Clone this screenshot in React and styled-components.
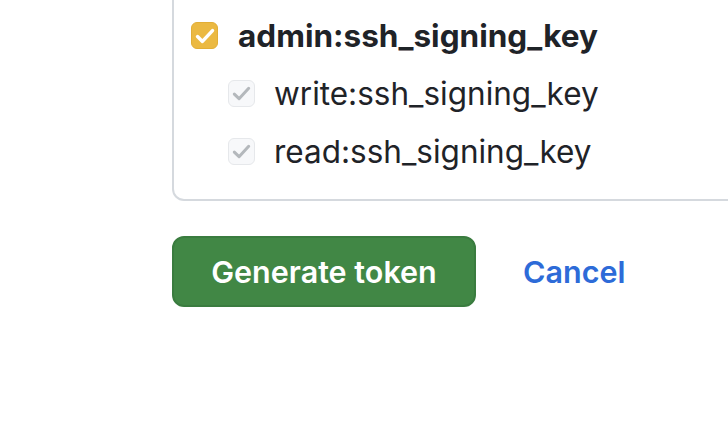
import React from 'react';
import { styled, createGlobalStyle } from 'styled-components';

const Global = createGlobalStyle`
  html, body {
    margin: 0;
    padding: 0;
    background: #ffffff;
    overflow: hidden;
  }
  body {
    font-family: Inter, 'Liberation Sans', Arial, sans-serif;
    color: #1f2328;
  }
`;

const Page = styled.div`
  width: 728px;
  height: 432px;
  padding-left: 172px;
  box-sizing: border-box;
`;

const Panel = styled.div`
  width: 640px;
  border: 2px solid #d5d9de;
  border-top: none;
  border-radius: 0 0 12px 12px;
  padding: 22px 0 34px 17px;
  box-sizing: border-box;
  display: flex;
  flex-direction: column;
  gap: 31px;
`;

const Row = styled.label`
  display: flex;
  align-items: center;
  gap: ${(p) => (p.child ? '19px' : '20px')};
  padding-left: ${(p) => (p.child ? '37px' : '0')};
  height: 27px;
  font-size: 31.5px;
  font-weight: ${(p) => (p.child ? 400 : 700)};
  white-space: nowrap;
`;

const Box = styled.span`
  flex: none;
  width: 27px;
  height: 27px;
  border-radius: 6px;
  box-sizing: border-box;
  display: flex;
  align-items: center;
  justify-content: center;
  background: ${(p) => (p.checked ? '#ebb942' : '#f7f8fa')};
  border: ${(p) => (p.checked ? '1px solid #e2ae36' : '1.5px solid #e6e8eb')};
`;

const Actions = styled.div`
  display: flex;
  align-items: center;
  gap: 47px;
  margin-top: 35px;
`;

const Button = styled.button`
  width: 304px;
  height: 71px;
  border-radius: 12px;
  background: #418745;
  border: 2px solid #3a7c3f;
  color: #ffffff;
  font-family: inherit;
  font-size: 30.5px;
  font-weight: 600;
  cursor: pointer;
`;

const Cancel = styled.a`
  color: #2d6bd8;
  font-size: 30.5px;
  font-weight: 600;
  text-decoration: none;
  cursor: pointer;
`;

const Check = ({ color, size, width = 2.2 }) => (
  <svg width={size} height={size} viewBox="0 0 16 16" fill="none">
    <path
      d="M3 8.4 L6.3 11.6 L13 4.4"
      stroke={color}
      strokeWidth={width}
      strokeLinecap="round"
      strokeLinejoin="round"
    />
  </svg>
);

const scopes = [
  { name: 'write:ssh_signing_key' },
  { name: 'read:ssh_signing_key' },
];

export default function App() {
  return (
    <Page>
      <Global />
      <Panel>
        <Row>
          <Box checked>
            <Check color="#ffffff" size={24} width={2.3} />
          </Box>
          admin:ssh_signing_key
        </Row>
        {scopes.map((s) => (
          <Row child key={s.name}>
            <Box>
              <Check color="#b4b8bc" size={23} width={2.1} />
            </Box>
            {s.name}
          </Row>
        ))}
      </Panel>
      <Actions>
        <Button>Generate token</Button>
        <Cancel>Cancel</Cancel>
      </Actions>
    </Page>
  );
}
